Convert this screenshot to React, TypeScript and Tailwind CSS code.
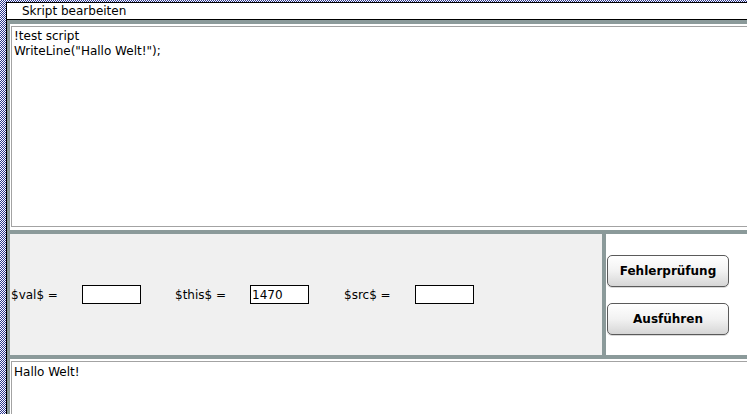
import React from 'react';

const font = "font-['DejaVu_Sans','Verdana',sans-serif]";

function VarField({ label, labelWidth, value, className = '' }: { label: string; labelWidth: string; value: string; className?: string }) {
  return (
    <div className={`flex items-center ${className}`}>
      <span className={`${labelWidth} text-[12px] text-black`}>{label}</span>
      <input
        defaultValue={value}
        className={`w-[59px] h-[19px] border border-black bg-white px-[1px] text-[12px] text-black outline-none ${font}`}
      />
    </div>
  );
}

function MacButton({ children }: { children: React.ReactNode }) {
  return (
    <button className="w-[122px] h-[32px] rounded-[5px] border border-[#5a5a5a] bg-gradient-to-b from-white via-[#f2f2f2] to-[#d6d6d6] text-[12px] font-bold text-black shadow-[0_1px_0_rgba(0,0,0,0.15)]">
      {children}
    </button>
  );
}

export default function App() {
  return (
    <div
      className={`w-[747px] h-[414px] overflow-hidden bg-white pl-[6px] pt-[2px] ${font} bg-[repeating-conic-gradient(#2a3590_0%_25%,#ffffff_0%_50%)] bg-[length:2px_2px]`}
    >
      <div className="flex h-[412px] w-[741px] flex-col border-l border-t border-black bg-white">
        {/* title bar */}
        <div className="h-[17px] shrink-0 border-b border-black bg-white pl-[15px] text-[12px] leading-[16px] text-black">
          Skript bearbeiten
        </div>

        {/* frameset */}
        <div className="flex flex-1 flex-col gap-[4px] bg-[#8b9a9a] pl-[3px] pt-[4px]">
          {/* editor */}
          <div className="h-[206px] shrink-0 overflow-hidden bg-white pl-[1px] pt-[2px]">
            <textarea
              readOnly
              defaultValue={'!test script\nWriteLine("Hallo Welt!");'}
              className={`block h-[201px] w-[760px] resize-none border border-[#a3a3a3] bg-white p-[2px] text-[12px] leading-[15px] text-black outline-none ${font}`}
            />
          </div>

          {/* variables + buttons */}
          <div className="flex h-[121px] shrink-0 gap-[4px]">
            <div className="flex w-[592px] items-center bg-[#f0f0f0] pl-[1px]">
              <VarField label="$val$ =" labelWidth="w-[71px]" value="" />
              <VarField label="$this$ =" labelWidth="w-[75px]" value="1470" className="ml-[34px]" />
              <VarField label="$src$ =" labelWidth="w-[71px]" value="" className="ml-[35px]" />
            </div>
            <div className="flex flex-1 flex-col justify-center gap-[16px] bg-white pl-[1px]">
              <MacButton>Fehlerprüfung</MacButton>
              <MacButton>Ausführen</MacButton>
            </div>
          </div>

          {/* output */}
          <div className="flex-1 overflow-hidden bg-white pl-[1px] pt-[2px]">
            <textarea
              readOnly
              defaultValue="Hallo Welt!"
              className={`block h-[80px] w-[760px] resize-none border border-[#a3a3a3] bg-white p-[2px] pt-[3px] text-[12px] leading-[15px] text-black outline-none ${font}`}
            />
          </div>
        </div>
      </div>
    </div>
  );
}
